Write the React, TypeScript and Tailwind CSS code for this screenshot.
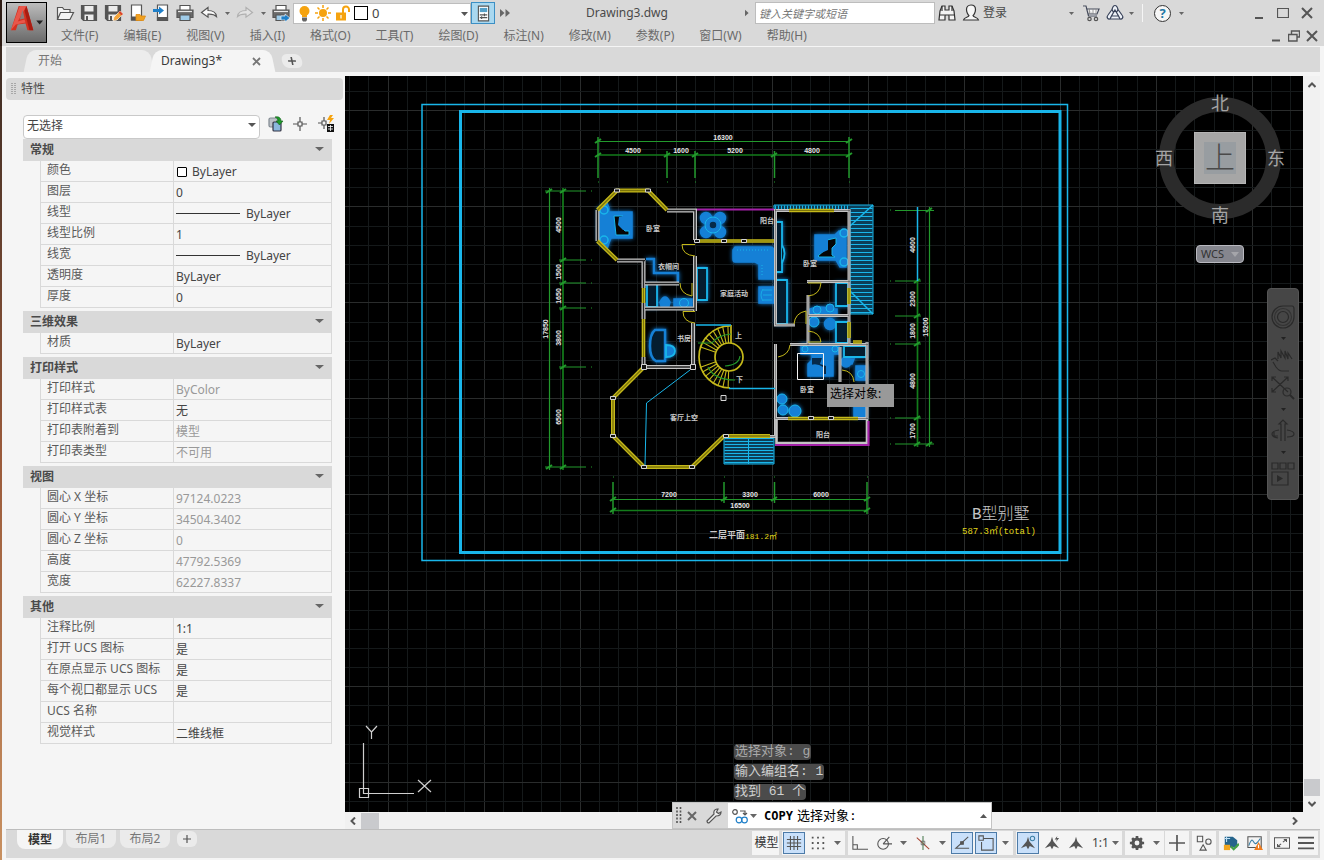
import React from 'react';
import clsx from 'clsx';

type Row = { label: string; value: string; muted?: boolean; swatch?: boolean; line?: boolean };

const SECTIONS: { title: string; rows: Row[] }[] = [
  {
    title: '常规',
    rows: [
      { label: '颜色', value: 'ByLayer', swatch: true },
      { label: '图层', value: '0' },
      { label: '线型', value: 'ByLayer', line: true },
      { label: '线型比例', value: '1' },
      { label: '线宽', value: 'ByLayer', line: true },
      { label: '透明度', value: 'ByLayer' },
      { label: '厚度', value: '0' },
    ],
  },
  { title: '三维效果', rows: [{ label: '材质', value: 'ByLayer' }] },
  {
    title: '打印样式',
    rows: [
      { label: '打印样式', value: 'ByColor', muted: true },
      { label: '打印样式表', value: '无' },
      { label: '打印表附着到', value: '模型', muted: true },
      { label: '打印表类型', value: '不可用', muted: true },
    ],
  },
  {
    title: '视图',
    rows: [
      { label: '圆心 X 坐标', value: '97124.0223', muted: true },
      { label: '圆心 Y 坐标', value: '34504.3402', muted: true },
      { label: '圆心 Z 坐标', value: '0', muted: true },
      { label: '高度', value: '47792.5369', muted: true },
      { label: '宽度', value: '62227.8337', muted: true },
    ],
  },
  {
    title: '其他',
    rows: [
      { label: '注释比例', value: '1:1' },
      { label: '打开 UCS 图标', value: '是' },
      { label: '在原点显示 UCS 图标', value: '是' },
      { label: '每个视口都显示 UCS', value: '是' },
      { label: 'UCS 名称', value: '' },
      { label: '视觉样式', value: '二维线框' },
    ],
  },
];

const MENUS = ['文件(F)', '编辑(E)', '视图(V)', '插入(I)', '格式(O)', '工具(T)', '绘图(D)', '标注(N)', '修改(M)', '参数(P)', '窗口(W)', '帮助(H)'];

/* ---------- small shared pieces ---------- */

function Ico({ children, className = 'w-5 h-5', box = '0 0 20 20' }: { children: React.ReactNode; className?: string; box?: string }) {
  return (
    <svg viewBox={box} className={clsx('shrink-0', className)} fill="none" stroke="#555" strokeWidth="1.2" aria-hidden="true">
      {children}
    </svg>
  );
}

function Caret({ className = 'w-[7px] h-1 text-[#666]' }: { className?: string }) {
  return (
    <svg viewBox="0 0 8 4" className={clsx('shrink-0', className)} preserveAspectRatio="none" aria-hidden="true">
      <path d="M0 0h8L4 4z" fill="currentColor" />
    </svg>
  );
}

function Tool({ label, children, className = 'w-6' }: { label: string; children: React.ReactNode; className?: string }) {
  return (
    <button type="button" aria-label={label} className={clsx('h-6 shrink-0 flex items-center justify-center', className)}>
      {children}
    </button>
  );
}

function Drop({ label, className = 'w-[15px]', small }: { label: string; className?: string; small?: boolean }) {
  return (
    <Tool label={label} className={className}>
      {small ? <Caret className="h-[3px] w-[5px] text-[#666]" /> : <Caret />}
    </Tool>
  );
}

const floppy = (
  <>
    <path d="M2.5 2.5h15v15h-13l-2-2z" fill="#555" />
    <path d="M5.5 3h9v5.500h-9z" fill="#ececec" stroke="none" />
    <path d="M5.5 11.500h9V17h-9z" fill="#ececec" stroke="none" />
    <path d="M7 13h2v4H7z" fill="#555" stroke="none" />
  </>
);

const printer = (
  <>
    <path d="M5 7V2.500h10V7" fill="#fff" />
    <path d="M2 7h16v7.500H2z" fill="#6a6a6a" />
    <path d="M3 8.500h14" stroke="#e8e8e8" />
    <path d="M5 12h10v5.500H5z" fill="#9fcbe8" />
  </>
);

/* ---------- title bar ---------- */

function TitleRow() {
  return (
    <div className="flex h-6 items-center">
      <div className="flex items-center pl-[6px]">
        <Tool label="打开"><Ico><path d="M2.500 16.500v-12h5l1.500 2h6v3M2.500 16.500l3-7h13l-3.500 7z" fill="#f4f4f4" /></Ico></Tool>
        <Tool label="保存"><Ico>{floppy}</Ico></Tool>
        <Tool label="另存为">
          <Ico>
            {floppy}
            <path d="M10 18l1-4 6-6 3 3-6 6z" fill="#f3a43c" stroke="#fff" strokeWidth=".6" />
            <path d="M15.500 9.500l3 3 1.500-1.500-3-3z" fill="#d8442f" stroke="none" />
          </Ico>
        </Tool>
        <Tool label="从移动设备打开">
          <Ico>
            <path d="M4.500 2h10v15h-10z" fill="#fff" /><path d="M4.500 14h6v3h-6z" fill="#555" />
            <path d="M9 17.500v-6h4l1 1.500h4.500l-2 4.500z" fill="#f0a020" stroke="#e08a10" strokeWidth=".8" />
          </Ico>
        </Tool>
        <Tool label="保存到移动设备">
          <Ico>
            <path d="M6.500 2h10v15.500h-10z" fill="#fff" /><path d="M6.500 14.500h10v3h-10z" fill="#555" />
            <path d="M2 6h6V3.500L13 7.500 8 11.500V9H2z" fill="#1f7fc8" stroke="none" />
          </Ico>
        </Tool>
        <Tool label="打印"><Ico>{printer}</Ico></Tool>
        <Tool label="放弃"><Ico><path d="M2.500 9.500l6.500-5v3c5 0 8 2 8.500 6-2-2-4.500-2.500-8.500-2.300v3z" fill="#fafafa" /></Ico></Tool>
        <Drop label="放弃列表" className="w-3" small />
        <Tool label="重做"><Ico><path d="M17.500 9.500l-6.500-5v3c-5 0-8 2-8.500 6 2-2 4.500-2.500 8.500-2.300v3z" fill="#e2e2e2" stroke="#b0b0b0" /></Ico></Tool>
        <Drop label="重做列表" className="w-3" small />
        <Tool label="发布">
          <Ico>{printer}<path d="M10 13h4v-2l5 4-5 4v-2h-4z" fill="#1f7fc8" stroke="#fff" strokeWidth=".6" /></Ico>
        </Tool>
      </div>

      <div className="relative flex h-[21px] w-[178px] shrink-0 items-center border border-[#bdbdbd] bg-white pl-1">
        <Ico className="w-[13px] h-[17px]" box="0 0 13 17">
          <circle cx="6.500" cy="6" r="5" fill="#f5a30f" stroke="none" /><path d="M4 10h5v2H4z" fill="#f5a30f" stroke="none" />
          <path d="M4 12.500h5V15l-1 1.500H5L4 15z" fill="#666" stroke="none" />
        </Ico>
        <Ico className="ml-1 w-4 h-4" box="0 0 16 16">
          <circle cx="8" cy="8" r="4" fill="#f5a30f" stroke="none" />
          <path d="M8 0v3M8 13v3M0 8h3M13 8h3M2.500 2.500l2 2M11.500 11.500l2 2M13.500 2.500l-2 2M4.500 11.500l-2 2" stroke="#f5a30f" strokeWidth="1.500" />
        </Ico>
        <Ico className="ml-1 w-[15px] h-4" box="0 0 15 16">
          <path d="M8 8V4.500a3 3 0 0 1 6 0V7" stroke="#f5a30f" strokeWidth="2" />
          <path d="M1 7.500h10v8H1z" fill="#f5a30f" stroke="none" /><path d="M6 10v3.500" stroke="#fff" />
        </Ico>
        <span className="ml-1 h-[14px] w-[14px] shrink-0 border border-black bg-white" />
        <select aria-label="图层" className="h-full flex-1 appearance-none bg-transparent pl-1 text-[13px] leading-4 text-[#444] outline-none">
          <option>0</option>
        </select>
        <Caret className="pointer-events-none absolute right-[2px] top-2 h-1 w-[7px] text-[#555]" />
      </div>
      <button type="button" aria-label="图层特性" className="flex h-[22px] w-6 shrink-0 items-center justify-center border border-[#3c8fc4] bg-[#a9d8f0]">
        <Ico className="w-[13px] h-[17px]" box="0 0 14 18">
          <path d="M1.500 1h11v16h-11z" fill="#fff" /><path d="M3 3h8v4.500H3z" fill="#55a0c8" stroke="none" />
          <path d="M3 10.500h8M3 13.500h8M8 9v3M5 12v3" />
        </Ico>
      </button>
      <Tool label="更多" className="w-5"><Ico className="w-[10px] h-2" box="0 0 10 8"><path d="M0 0l4.500 4L0 8zM5.500 0L10 4 5.500 8z" fill="#666" stroke="none" /></Ico></Tool>

      <h1 className="min-w-0 flex-1 truncate text-center text-[12px] leading-4 text-[#4a4a4a]">Drawing3.dwg</h1>

      <Tool label="展开搜索" className="w-4"><Ico className="w-1 h-2" box="0 0 5 8"><path d="M0 0l4.500 4L0 8z" fill="#666" stroke="none" /></Ico></Tool>
      <input
        type="text"
        aria-label="搜索"
        placeholder="键入关键字或短语"
        className="h-[22px] w-[180px] shrink-0 border border-[#bdbdbd] bg-white px-[3px] text-[11px] italic text-[#333] outline-none placeholder:text-[#777]"
      />
      <Tool label="查找">
        <Ico>
          <path d="M3 8l2-5h3v4h4V3h3l2 5 1 9h-6v-5H8v5H2z" fill="#f4f4f4" stroke="#333" /><path d="M2.500 12h5M12.500 12h5M5 3v5M15 3v5" stroke="#333" />
        </Ico>
      </Tool>
      <button type="button" className="flex h-6 shrink-0 items-center text-xs text-[#4a4a4a]">
        <Ico className="w-6 h-5" box="0 0 24 20">
          <path d="M12 2c3 0 4.500 2 4.500 4.500S15 12 14 12.500c0 2 5 1.500 5.500 4.500h-15c.5-3 5.500-2.500 5.500-4.500-1-.5-2.500-3.500-2.500-6S9 2 12 2z" fill="#f6f6f6" stroke="#333" />
        </Ico>
        登录
      </button>
      <Drop label="登录菜单" className="ml-[56px] w-4" small />
      <Tool label="购物车">
        <Ico><path d="M2 3h3l2.500 10H16M6 6h12l-2 5H7" fill="#f6f6f6" stroke="#444a5a" /><path d="M8.500 6v5M12 6v5M15 6v5" stroke="#888" strokeWidth=".8" /><circle cx="8.500" cy="16" r="1.700" /><circle cx="15" cy="16" r="1.700" /></Ico>
      </Tool>
      <Tool label="应用程序">
        <Ico>
          <path d="M10 2.500c2 0 2.500 2 3 4l4 5.500c2 2.500 0 4.500-2 4H5c-2 .5-4-1.500-2-4l4-5.500c.5-2 1-4 3-4z" fill="#eef2f8" stroke="#39435a" />
          <path d="M10 7l3.500 6h-7zM7 6.500l1.500 3M13 6.500l-1.500 3M6.500 13L5 16M13.500 13l1.500 3" stroke="#39435a" />
        </Ico>
      </Tool>
      <Drop label="应用程序菜单" className="w-2" small />
      <span className="mx-[7px] h-[18px] w-px shrink-0 bg-[#f5f5f5]" />
      <button type="button" aria-label="帮助" className="ml-1 flex h-[17px] w-[17px] shrink-0 items-center justify-center rounded-full border border-[#333] bg-[#f6f6f6] text-[13px] font-bold leading-none text-[#2377a5]">?</button>
      <Drop label="帮助菜单" className="w-5" small />
      <div className="ml-14 flex shrink-0 items-center pr-[5px]">
        <Tool label="最小化"><Ico className="w-3 h-3" box="0 0 12 12"><path d="M2 11h8" strokeWidth="2" /></Ico></Tool>
        <Tool label="最大化"><Ico className="w-3 h-3" box="0 0 12 12"><path d="M.500 1.500h11v9H.500z" /></Ico></Tool>
        <Tool label="关闭"><Ico className="w-3 h-3" box="0 0 12 12"><path d="M1 1l10 10M11 1L1 11" strokeWidth="2" /></Ico></Tool>
      </div>
    </div>
  );
}

function Header() {
  return (
    <header className="flex h-[46px] shrink-0 bg-[#d9d9d9]">
      <div className="w-[2px] shrink-0 bg-[#2e1c14]" />
      <button type="button" aria-label="应用程序菜单" className="relative ml-1 mt-[2px] h-[41px] w-[41px] shrink-0 border border-black bg-gradient-to-b from-[#bdbdbd] to-[#6a6a6a]">
        <svg viewBox="0 0 40 40" className="h-full w-full" aria-hidden="true">
          <path d="M4 28L12 3h8l7 25h-6l-2-7-8 1-2 6z" fill="#d5301f" />
          <path d="M13 3h7l-9 16 7-2 1 3-10 2-5 6z" fill="#e8574a" />
          <path d="M16 7l2 9-5 1z" fill="#8d7a78" />
          <path d="M20 3l7 25h-4l-5-20z" fill="#a81c12" />
          <path d="M30 18h7l-3.500 4z" fill="#222" />
        </svg>
      </button>
      <div className="flex min-w-0 flex-1 flex-col pt-px">
        <TitleRow />
        <div className="flex h-[21px] items-center">
          <nav className="flex gap-[25px] pl-[14px] pt-px text-xs text-[#6a6a6a]">
            {MENUS.map((m) => (
              <button type="button" key={m} className="whitespace-nowrap leading-4">{m}</button>
            ))}
          </nav>
          <div className="ml-auto flex pr-[3px]">
            <Tool label="最小化文档" className="w-[18px]"><Ico className="w-3 h-3" box="0 0 12 12"><path d="M2 10.500h8" strokeWidth="2" /></Ico></Tool>
            <Tool label="还原文档" className="w-[18px]"><Ico className="w-3 h-3" box="0 0 12 12"><path d="M3.500 4V1h8v6H9M.500 4.500H9V11H.500z" strokeWidth="1.400" /></Ico></Tool>
            <Tool label="关闭文档" className="w-[18px]"><Ico className="w-3 h-3" box="0 0 12 12"><path d="M1 1l10 10M11 1L1 11" strokeWidth="2" /></Ico></Tool>
          </div>
        </div>
      </div>
    </header>
  );
}

function FileTabs() {
  return (
    <div className="mr-1 flex h-[25px] shrink-0 items-end bg-[#d9d9d9] pl-5 text-[#777]">
      <button
        type="button"
        className="relative h-[22px] w-[126px] pl-3 text-left text-xs before:absolute before:inset-y-0 before:left-0 before:right-8 before:-skew-x-12 before:rounded-tl-lg before:bg-[#ececec] after:absolute after:inset-y-0 after:left-8 after:right-0 after:skew-x-12 after:rounded-tr-lg after:bg-[#ececec]"
      >
        <span className="relative z-10">开始</span>
      </button>
      <div className="relative flex h-[22px] w-[121px] items-center pl-[9px] before:absolute before:inset-y-0 before:left-0 before:right-8 before:-skew-x-12 before:rounded-tl-lg before:bg-[#f5f5f5] after:absolute after:inset-y-0 after:left-8 after:right-0 after:skew-x-12 after:rounded-tr-lg after:bg-[#f5f5f5]">
        <button type="button" className="relative z-10 text-[12px] text-[#3a3a3a]">Drawing3*</button>
        <button type="button" aria-label="关闭选项卡" className="relative z-10 ml-auto mr-3">
          <Ico className="w-[9px] h-[9px]" box="0 0 9 9"><path d="M1 1l7 7M8 1L1 8" stroke="#777" strokeWidth="1.800" /></Ico>
        </button>
      </div>
      <button type="button" aria-label="新图形" className="mb-1 ml-[9px] flex h-[14px] w-5 skew-x-12 items-center justify-center rounded-md bg-[#ebebeb]">
        <Ico className="w-2 h-2" box="0 0 8 8"><path d="M4 0v8M0 4h8" strokeWidth="1.600" /></Ico>
      </button>
    </div>
  );
}

/* ---------- properties palette ---------- */

function Palette() {
  return (
    <aside className="flex w-[339px] shrink-0 flex-col bg-[#f5f5f5] pt-[2px]">
      <div className="mr-[2px] flex h-[22px] shrink-0 items-center rounded-sm bg-[#d9d9d9] pl-[5px]">
        <Ico className="w-[5px] h-3" box="0 0 5 12"><path d="M1 0v12M4 0v12" stroke="#777" strokeDasharray="1 1" strokeWidth="1" /></Ico>
        <h2 className="ml-[5px] text-xs text-[#4a4a4a]">特性</h2>
      </div>
      <div className="mt-3 flex h-6 items-center pl-[17px]">
        <div className="relative h-6 w-[237px]">
          <select aria-label="选择" className="h-full w-full appearance-none rounded-sm border border-[#c9c9c9] bg-white pl-[3px] pb-[2px] text-xs text-[#444] outline-none">
            <option>无选择</option>
          </select>
          <Caret className="pointer-events-none absolute right-1 top-[11px] h-1 w-2 text-[#555]" />
        </div>
        <Tool label="PICKADD" className="ml-1 w-6">
          <Ico className="w-4 h-4" box="0 0 16 16">
            <rect x="1" y="2" width="9" height="9" rx="1.500" fill="#bcc2c8" stroke="#808890" /><rect x="5" y="6" width="8" height="9" rx="1" fill="#8bb8dd" stroke="#334" />
            <path d="M7 1c4-1 6 1 6 4h2l-3.500 4L8 5h2c0-2-1-3-3-4z" fill="#1f9a2a" stroke="#0d5c15" strokeWidth=".6" />
          </Ico>
        </Tool>
        <Tool label="选择对象" className="w-6">
          <Ico className="w-[14px] h-[14px]" box="0 0 14 14"><path d="M7 0v5M7 9v5M0 7h5M9 7h5M5 5h4v4H5z" /></Ico>
        </Tool>
        <Tool label="快速选择" className="w-7">
          <Ico className="w-[18px] h-[18px]" box="0 0 18 18">
            <path d="M7 2v4M7 10v4M1 8h4M5 6h4v4H5z" /><path d="M13 0l-3 5h3l-1 4 5-6h-3l2-3z" fill="#f5a30f" stroke="none" />
            <path d="M10 9h7v8h-7z" fill="#111" stroke="none" /><path d="M11 11.500h5M11 14h5M13.500 10v6" stroke="#fff" strokeWidth=".8" />
          </Ico>
        </Tool>
      </div>
      <div className="ml-[17px] mr-[13px] mt-[3px] flex flex-col gap-[3px]">
        {SECTIONS.map((s) => (
          <section key={s.title}>
            <button type="button" className="flex h-[22px] w-full items-center bg-[#d9d9d9] pl-[7px] pr-2 text-xs font-bold text-[#4a4a4a]">
              {s.title}
              <Caret className="mb-[2px] ml-auto h-1 w-[9px] text-[#666]" />
            </button>
            <div className="pl-[17px]">
              <table className="w-full table-fixed border-separate border-spacing-0 border-l border-[#d9d9d9]">
                <tbody>
                  {s.rows.map((r) => (
                    <tr key={r.label} className="h-[21px]">
                      <th scope="row" className="w-[133px] whitespace-nowrap border-b border-r border-[#d9d9d9] p-0 pb-[3px] pl-[6px] text-left text-xs font-normal leading-[17px] text-[#5a5a5a]">
                        {r.label}
                      </th>
                      <td className={clsx('border-b border-r border-[#d9d9d9] p-0 pl-[2px] pt-px text-[12px] leading-[17px]', r.muted ? 'text-[#999]' : 'text-[#444]')}>
                        <div className="flex h-[17px] items-center">
                          {r.swatch && <span className="ml-px mr-[5px] h-[10px] w-[10px] rounded-[1px] border border-black bg-white" />}
                          {r.line && <span className="mr-[6px] h-px w-16 bg-[#333]" />}
                          {r.value}
                        </div>
                      </td>
                    </tr>
                  ))}
                </tbody>
              </table>
            </div>
          </section>
        ))}
      </div>
    </aside>
  );
}

/* ---------- drawing ---------- */

const G = '#22992c';
const W = '#c4c4c4';
const Y = '#c4b81a';
const B = '#1580d6';
const C = '#19b6ea';

// grid origin and step, every fifth line is a major one
const GRID_X = Array.from({ length: 80 }, (_, i) => ({ at: Math.round(387.500 + (i - 5) * 19.21), major: i % 5 === 0 }));
const GRID_Y = Array.from({ length: 60 }, (_, i) => ({ at: Math.round(110.300 + (i - 5) * 19.2), major: i % 5 === 0 }));

function Wall({ d, color = W, core = '#202020', w = 4 }: { d: string; color?: string; core?: string; w?: number }) {
  return (
    <>
      <path d={d} stroke={color} strokeWidth={w} />
      <path d={d} stroke={core} strokeWidth={w - 2.6} />
    </>
  );
}

function Num({ x, y, children, up }: { x: number; y: number; children: string; up?: boolean }) {
  return (
    <text x={x} y={y} textAnchor="middle" transform={up ? `rotate(-90 ${x} ${y})` : undefined} fill="#e6e6e6" className="font-[Liberation_Sans,sans-serif] text-[7px] font-bold">
      {children}
    </text>
  );
}

function Room({ x, y, children }: { x: number; y: number; children: string }) {
  return <text x={x} y={y} fill="#cacaca" className="text-[7px] font-bold">{children}</text>;
}

function FloorPlan() {
  const spokes = Array.from({ length: 19 }, (_, i) => {
    const a = ((92 + i * 9.8) * Math.PI) / 180;
    return `M${729 + 14 * Math.cos(a)} ${357 - 14 * Math.sin(a)}L${729 + 31 * Math.cos(a)} ${357 - 31 * Math.sin(a)}`;
  }).filter((_, i) => i < 8 || i > 10).join('');
  const ticks = [
    [598, 141], [849, 141], [598, 155], [667, 155], [695, 155], [774, 155], [849, 155],
    [549, 191], [549, 467], [563, 191], [563, 260], [563, 283], [563, 308], [563, 367], [563, 467],
    [917, 281], [917, 316], [917, 344], [917, 418], [917, 444], [929, 210], [929, 444],
    [613, 499], [724, 499], [774, 499], [867, 499], [613, 510], [867, 510],
  ];
  return (
    <svg viewBox="345 76 958 736" preserveAspectRatio="xMinYMin slice" className="absolute inset-0 h-full w-full" fill="none" role="img" aria-label="二层平面图">
      <g shapeRendering="crispEdges">
        {GRID_X.map((g) => <path key={g.at} d={`M${g.at + 0.5} 0V1200`} stroke={g.major ? '#2a2c2c' : '#15191a'} />)}
        {GRID_Y.map((g) => <path key={g.at} d={`M0 ${g.at + 0.5}H1800`} stroke={g.major ? '#2a2c2c' : '#15191a'} />)}
      </g>

      {/* sheet frame */}
      <path d="M422 104.500H1067.500V560.500H422z" stroke={C} strokeWidth="1.500" />
      <path d="M460.500 111.500H1060V552.500H460.500z" stroke={C} strokeWidth="3" />

      {/* dimension lines */}
      <g stroke={G} strokeWidth="1.200">
        <path d="M598 141.500H849M549.500 188V470M929.500 207V447M613 499.500H867" />
        <path d="M598 155H849M563 188V470M917.500 281V447M613 510.500H867" strokeWidth="1.700" stroke="#137c1b" />
        <path d="M598 137V178M667 151V178M695 151V178M774.500 151V178M849 137V178" strokeWidth="1.500" />
        <path d="M545 191H586M559 260H586M559 283H586M559 308H586M559 367H586M545 467H586" />
        <path d="M895 210.500H934M895 281H921M895 316H921M895 344H921M895 418H921M895 444H934" />
        <path d="M613 482V514M724 482V503M774.500 482V503M867 482V514" strokeWidth="1.500" />
        {ticks.map(([x, y]) => <path key={`${x}-${y}`} d={`M${x - 3} ${y + 2}L${x + 3} ${y - 2}`} strokeWidth="2" />)}
        <path d="M591 191h1M591 260h1M591 283h1M591 308h1M591 367h1M591 467h1M890 210h1M890 281h1M890 344h1M890 418h1M890 444h1M598 182h1M667 182h1M695 182h1M774 182h1M849 182h1M613 477h1M724 477h1M774 477h1M867 477h1" />
      </g>
      <path d="M917.500 207V281" stroke={C} strokeWidth="1.500" />

      <Num x={723} y={140}>16300</Num>
      <Num x={633} y={153}>4500</Num>
      <Num x={681} y={153}>1600</Num>
      <Num x={735} y={153}>5200</Num>
      <Num x={812} y={153}>4800</Num>
      <Num x={561} y={225} up>4500</Num>
      <Num x={561} y={272} up>1500</Num>
      <Num x={561} y={296} up>1650</Num>
      <Num x={561} y={338} up>3800</Num>
      <Num x={561} y={417} up>6500</Num>
      <Num x={548} y={329} up>17850</Num>
      <Num x={915} y={245} up>4600</Num>
      <Num x={915} y={299} up>2300</Num>
      <Num x={915} y={331} up>1800</Num>
      <Num x={915} y={381} up>4800</Num>
      <Num x={915} y={431} up>1700</Num>
      <Num x={928} y={327} up>15200</Num>
      <Num x={669} y={497}>7200</Num>
      <Num x={750} y={497}>3300</Num>
      <Num x={821} y={497}>6000</Num>
      <Num x={740} y={508}>16500</Num>

      {/* roof and porch hatching */}
      <path d="M774 205H873V314H850V210H774z" fill="#0c3f58" stroke={C} />
      <path d="M775 207.500H850" stroke={C} strokeWidth="4" strokeDasharray="1 2" />
      <path d="M861.500 208V314" stroke={C} strokeWidth="22" strokeDasharray="1 3" />
      <path d="M850 226L873 205M850 291L873 314" stroke={C} strokeWidth="1.500" />
      <path d="M724 437H774V464H724z" fill="#0c3f58" stroke={C} />
      <path d="M749 438V464" stroke={C} strokeWidth="49" strokeDasharray="1 2" />
      <path d="M748.500 437V464" stroke={C} />

      {/* furniture, highlighted */}
      <g fill={B} stroke={B} strokeWidth="1.500" className="[filter:drop-shadow(0_0_2px_#1580d6)]">
        <path d="M598 209l9-6 2 5v4h23v26h-21l-2 5-2 6-9-9z" />
        <path d="M614 216h9l-4 8 6 7h4v4H616z" fill="#050505" stroke={C} strokeWidth="1" />
        <path d="M619 217l12-3v14l-8 2-5-5z" stroke="none" />
        <circle cx="604" cy="210" r="4" stroke={C} /><circle cx="604" cy="240" r="4" stroke={C} />
        <circle cx="706" cy="218" r="5.500" /><circle cx="720" cy="218" r="5.500" /><circle cx="706" cy="232" r="5.500" /><circle cx="720" cy="232" r="5.500" />
        <circle cx="713" cy="225" r="8" stroke={C} strokeWidth="1" /><circle cx="713" cy="225" r="4" fill="#062a4a" />
        <path d="M735 247H771q3 1 3 4V279H759V264l-4-2H735q-2 0-2-3V250z" />
        <path d="M737 250H768M762 265V277" stroke={C} strokeWidth="1" strokeDasharray="1 2" />
        <path d="M759 287h15v16h-15z" /><path d="M763 289q-4 6 0 12M763 290h9M763 295h9M763 300h9" fill="none" stroke={C} strokeWidth=".8" />
        <path d="M815 235H835l4-4h7v36h-6l-4-7H815z" />
        <path d="M818 256l9-8v-8l9-2v6l-4 4v7l3 2h-16z" fill="#050505" stroke={C} strokeWidth="1" />
        <path d="M815 236h13v14l-11 5z" stroke="none" />
        <circle cx="844" cy="233" r="4" stroke={C} /><circle cx="844" cy="262" r="4" stroke={C} />
        <path d="M810 309q10-4 22 0h5v7h-28v-5z" /><circle cx="817" cy="310" r="4" stroke={C} strokeWidth="1" /><circle cx="830" cy="308" r="4" stroke={C} strokeWidth="1" />
        <circle cx="814" cy="322" r="5" stroke={C} strokeWidth="1" /><circle cx="830" cy="324" r="5.500" />
        <path d="M801 344H839V354H833V376H808V364l4-4V354H801z" />
        <path d="M812 358h10l-2 6 6 2v8h-9l-5-3z" fill="#062a4a" stroke="none" /><path d="M808 366q8-4 15 1v9h-15z" stroke="none" />
        <circle cx="805" cy="349" r="3" stroke={C} strokeWidth="1" /><circle cx="835" cy="349" r="3" stroke={C} strokeWidth="1" />
        <circle cx="782" cy="399" r="5" stroke={C} strokeWidth="1" /><circle cx="783" cy="410" r="5" stroke={C} strokeWidth="1" /><circle cx="795" cy="411" r="6" stroke={C} strokeWidth="1" />
        <circle cx="846" cy="362" r="5" /><path d="M848 359h6l-2 5h-4zM856 366h11v14h-11zM854 400h12v17h-12z" /><circle cx="861" cy="374" r="3.500" stroke={C} strokeWidth="1" />
        <path d="M661 306l-1-4q5-10 10 0l-1 4zM648 306q4-6 9 0zM674 299h18v7h-18z" /><circle cx="684" cy="303" r="4.500" stroke={C} strokeWidth="1" />
      </g>
      <g stroke={C} strokeWidth="1.800" fill="#041d30" className="[filter:drop-shadow(0_0_2px_#1580d6)]">
        <path d="M697 268h10v32H697zM776 222h6v50h-6zM776 280h11v44H776zM836 283h12v23h-12zM836 322h12v21h-12zM844 346h22v11h-22zM647 284h10v23h-10z" />
        <path d="M782 245q5 8 0 18" />
        <path d="M646 259h8v14h24v10" fill="none" stroke={B} strokeWidth="2.500" />
        <path d="M655 330h10v31H656q-6-3-6-15t5-16z" stroke={B} strokeWidth="2.500" /><path d="M666 345q9 0 9 6t-9 6z" fill={B} />
      </g>

      {/* outer and inner walls */}
      <Wall d="M597.500 210V241M617 260.500H645M643.500 260V288M643.500 303V319M643.500 357V367H693V323M695 311V256M695 240V210.500H667M645 283.500H679M645 308.500H695" />
      <Wall d="M775.500 209V325H795M775 210.500H850M849 209V283M807 281.500H850M808 295V345M808 315.500H849M849 283V344M775.500 344V437M790 344.500H868M867 342V419M840 347V382M770 436.500H776M776 418.500H868" w={3} />
      <Wall d="M776.500 419V443H867V419" w={2.600} />
      <Wall d="M597.500 210L617 190.500H648L667 210M597.500 241L617 260M644 367L613 398V436L644 467H692L724 436H770" color={Y} core="#7c7409" />
      <Wall d="M643.500 288V303M643.500 319V357M697 241H774M789 210.500H834M788 418.500H858M849 288V304M849 322V338M853 342H862" color={Y} core="#7c7409" w={3.600} />
      <g fill="#111" stroke="#d4d4d4" strokeWidth="1">
        {[[617, 190.500], [648, 190.500], [613, 398], [613, 436], [644, 467], [692, 467], [726, 436], [724, 241], [744, 241], [697, 241], [811, 418], [831, 418]].map(([x, y]) => (
          <path key={`${x}-${y}`} d={`M${x - 2.500} ${y - 1.500}h5v3h-5z`} />
        ))}
        <path d="M641.500 364.500h5v5h-5zM690.500 364.500h5v5h-5zM721 395.500h5v5h-5z" />
      </g>
      <path d="M697 209.500H774M775 445H868.500V421" stroke="#a321a8" strokeWidth="2.200" />

      {/* doors */}
      <path
        d="M695 244.500H682Q682 255 695 256M680 283Q680 294 692 296V283M695 311.500H683Q683 322 695 323M808 283H821Q820 295 808 296M794 324Q795 313 806 311V324M808 331Q820 332 821 342H808M778 357Q789 355 790 345M842 370Q853 371 854 382"
        stroke={Y}
      />

      {/* staircase */}
      <g stroke={Y} strokeWidth="1.700">
        <circle cx="729" cy="357" r="14" />
        <path d="M730 326A31 31 0 1 0 730 388M731 325V343" />
        <path d={spokes} strokeWidth="1.100" />
      </g>
      <path d="M698 343H712Q718 335 731 334M708 367Q714 380 735 380M740 356Q739 365 725 366" stroke={G} strokeWidth="1.200" />
      <path d="M696 325H731M729 388.500H775" stroke={C} strokeWidth="1.500" />
      <path d="M690 370L646.500 403L645 465" stroke={C} />

      <Room x={646} y={231}>卧室</Room>
      <Room x={658} y={269}>衣帽间</Room>
      <Room x={760} y={223}>阳台</Room>
      <Room x={720} y={296}>家庭活动</Room>
      <Room x={803} y={266}>卧室</Room>
      <Room x={677} y={341}>书房</Room>
      <Room x={735} y={338}>上</Room>
      <Room x={736} y={382}>下</Room>
      <Room x={670} y={420}>客厅上空</Room>
      <Room x={800} y={392}>卧室</Room>
      <Room x={816} y={437}>阳台</Room>
      <text x="709" y="538" fill="#cacaca" className="text-[9px] font-bold">二层平面</text>
      <text x="745" y="539" fill="#e0d81c" className="font-[Liberation_Mono,Noto_Sans_CJK_SC,monospace] text-[8px]">181.2㎡</text>
      <text x="972" y="519" fill="#c4c4c4" className="font-[Liberation_Mono,Noto_Sans_CJK_SC,monospace] text-[16px] font-light">B型别墅</text>
      <text x="962" y="534" fill="#e0d81c" className="font-[Liberation_Mono,Noto_Sans_CJK_SC,monospace] text-[9px]">587.3㎡(total)</text>

      {/* pick box */}
      <path d="M797.500 353.500H823.500V379.500H797.500z" stroke="#f4f4f4" />

      {/* UCS icon */}
      <path d="M363.500 743V793.500H414M359.500 788.500h9v9h-9zM366 726l5.500 6V739M377 726l-5.500 6M418 780l13 12M431 780l-13 12" stroke="#cfcfcf" strokeWidth="1.200" />
    </svg>
  );
}

function ViewCube() {
  return (
    <div className="absolute right-[18px] top-[17px] flex flex-col items-center text-[18px] leading-6 text-[#a5a5a5]">
      <div className="relative h-[130px] w-[130px]">
        <div className="absolute inset-1 rounded-full border-[15px] border-[#2b2b2b]" />
        <button type="button" className="absolute -top-[2px] left-1/2 -translate-x-1/2">北</button>
        <button type="button" className="absolute left-0 top-1/2 -translate-y-1/2">西</button>
        <button type="button" className="absolute right-0 top-1/2 -translate-y-1/2">东</button>
        <button type="button" className="absolute -bottom-1 left-1/2 -translate-x-1/2">南</button>
        <button type="button" aria-label="上" className="absolute inset-[39px] flex items-center justify-center border border-[#b5b5b5] bg-[#a6a6a6]">
          <span className="flex h-8 w-8 items-center justify-center bg-[#989da1] font-[Liberation_Serif,Noto_Sans_CJK_SC,serif] text-[30px] font-light leading-8 text-[#4a4a4a]">上</span>
        </button>
      </div>
      <button type="button" className="mt-[22px] flex h-[18px] w-12 items-center justify-between rounded border border-[#b9b9c0] bg-[#85868e] px-1 text-[11px] leading-4 text-[#333]">
        WCS <Caret className="h-[5px] w-2 text-[#a5a5aa]" />
      </button>
    </div>
  );
}

function NavBar() {
  return (
    <div className="absolute right-1 top-[212px] flex h-[212px] w-8 flex-col items-center rounded-sm border border-[#555] bg-[#464646] pt-4">
      <Tool label="全导航控制盘" className="w-7"><Ico className="w-6 h-6" box="0 0 24 24"><path d="M12 1h9q2 0 2 3v8a11 11 0 1 1-11-11z" stroke="#2a2a2a" /><circle cx="12" cy="12" r="5.500" stroke="#2a2a2a" /><circle cx="12" cy="12" r="8.500" stroke="#333" /></Ico></Tool>
      <Caret className="my-2 h-[3px] w-[5px] text-[#222]" />
      <Tool label="平移" className="w-7"><Ico className="w-6 h-6" box="0 0 24 24"><path d="M7 11V4l3 6V3l4 7V3l3 8V5l4 6M0 12l4-2 3 3M2 14l3 5q3 4 6 4h7" stroke="#2a2a2a" /></Ico></Tool>
      <Tool label="缩放" className="mt-1 w-7"><Ico className="w-6 h-6" box="0 0 24 24"><path d="M1 1l16 15M17 1L1 16M1 5V1h4M13 1h4v4M1 12v4h4" stroke="#2a2a2a" /><circle cx="16" cy="16" r="4" stroke="#2a2a2a" /><path d="M19 19l4 4" stroke="#2a2a2a" strokeWidth="2" /></Ico></Tool>
      <Caret className="my-2 h-[3px] w-[5px] text-[#222]" />
      <Tool label="动态观察" className="w-7"><Ico className="w-6 h-6" box="0 0 24 24"><path d="M10 22V5H8l4-4 4 4h-2v17M8 11q-7 1-7 4t6 4M16 11q7 1 7 4t-7 3M2 17h5M3 13v5" stroke="#2a2a2a" /></Ico></Tool>
      <Caret className="my-2 h-[3px] w-[5px] text-[#222]" />
      <Tool label="ShowMotion" className="w-7"><Ico className="w-6 h-6" box="0 0 24 24"><path d="M1 1h6v6H1zM9 1h6v6H9zM17 1h6v6h-6zM1 10h16v13H1z" stroke="#2a2a2a" /><path d="M6 13l6 3.500L6 20z" fill="#2a2a2a" stroke="none" /></Ico></Tool>
    </div>
  );
}

function CommandLine() {
  const history = ['选择对象: g', '输入编组名: 1', '找到 61 个'];
  return (
    <div className="absolute -bottom-[17px] left-[327px] w-[320px] font-[DejaVu_Sans_Mono,Noto_Sans_CJK_SC,monospace]">
      <div className="flex flex-col items-start gap-1 pb-[2px] pl-[62px] font-[Liberation_Mono,Noto_Sans_CJK_SC,monospace] text-[13px] leading-4 text-[#cfcfcf]">
        {history.map((h) => (
          <p key={h} className="rounded-sm bg-[#4b4b4b] px-px first:text-[#a8a8a8]">{h}</p>
        ))}
      </div>
      <div className="flex h-[27px] items-stretch border border-[#c4c4c4] bg-white">
        <div className="flex w-[55px] shrink-0 items-center bg-[#d9d9d9]">
          <Ico className="ml-[3px] w-[6px] h-[17px]" box="0 0 6 17"><path d="M1 0v17M4.500 0v17" stroke="#555" strokeDasharray="2 1.500" strokeWidth="1.600" /></Ico>
          <Tool label="关闭命令行" className="w-5"><Ico className="w-[10px] h-[10px]" box="0 0 10 10"><path d="M1 1l8 8M9 1L1 9" stroke="#666" strokeWidth="2" /></Ico></Tool>
          <Tool label="自定义"><Ico className="w-4 h-4" box="0 0 16 16"><path d="M1 13l7-7q-1-4 3-5l1 0-1.500 3 2 1.500L15 4q0 4-5 4l-7 7q-2 0-2-2z" fill="#eee" /></Ico></Tool>
        </div>
        <button type="button" aria-label="近期命令" className="flex w-9 shrink-0 items-center gap-[2px] pl-1">
          <Ico className="w-4 h-4" box="0 0 16 16"><circle cx="3" cy="4" r="2.300" /><path d="M8 3h5v4M11 5l2 2 2-2" /><circle cx="7" cy="12" r="2.800" stroke="#1f7fc8" /><circle cx="12.500" cy="12" r="2.800" stroke="#1f7fc8" /></Ico>
          <Caret />
        </button>
        <label className="flex min-w-0 flex-1 items-center whitespace-nowrap text-xs text-black">
          <b className="font-bold">COPY</b>
          <span className="ml-1 text-[13px]">选择对象:</span>
          <input type="text" aria-label="命令" className="min-w-0 flex-1 outline-none" />
        </label>
        <button type="button" aria-label="命令历史" className="flex w-4 shrink-0 items-center justify-center"><Caret className="h-1 w-[7px] rotate-180 text-[#555]" /></button>
      </div>
    </div>
  );
}

function Canvas() {
  return (
    <main className="flex min-w-0 flex-1 flex-col">
      <div className="flex min-h-0 flex-1">
        <div className="relative min-w-0 flex-1 bg-black">
          <div className="absolute inset-0 overflow-hidden">
            <FloorPlan />
            <div className="absolute left-[482px] top-[308px] h-[23px] w-[67px] bg-[#999] pl-[3px] text-[12px] leading-5 text-black">选择对象:</div>
            <ViewCube />
            <NavBar />
          </div>
          <CommandLine />
        </div>
        <div className="flex w-[17px] shrink-0 flex-col items-center bg-[#f1f1f1]">
          <Tool label="向上滚动" className="w-4"><Ico className="mb-[6px] w-2 h-2" box="0 0 8 8"><path d="M.500 6L4 2.500 7.500 6" strokeWidth="2" /></Ico></Tool>
          <div className="mt-auto h-[17px] w-4 bg-[#c9cacd]" />
          <Tool label="向下滚动" className="w-4 mb-[-8px]"><Ico className="mb-2 w-2 h-2" box="0 0 8 8"><path d="M.500 2L4 5.500 7.500 2" strokeWidth="2" /></Ico></Tool>
        </div>
      </div>
      <div className="flex h-[17px] shrink-0 items-center bg-[#f1f1f1] pr-[17px]">
        <button type="button" aria-label="向左滚动" className="flex h-4 w-4 items-center justify-center"><Ico className="w-2 h-2" box="0 0 8 8"><path d="M6 .500L2.500 4 6 7.500" strokeWidth="2" /></Ico></button>
        <div className="h-4 w-[18px] bg-[#c9cacd]" />
        <button type="button" aria-label="向右滚动" className="ml-auto flex h-4 w-4 items-center justify-center"><Ico className="w-2 h-2" box="0 0 8 8"><path d="M2 .500L5.500 4 2 7.500" strokeWidth="2" /></Ico></button>
      </div>
    </main>
  );
}

/* ---------- status bar ---------- */

function Group({ children }: { children: React.ReactNode }) {
  return <div className="flex h-6 shrink-0 items-center bg-[#f4f4f4]">{children}</div>;
}

function Toggle({ label, on, children }: { label: string; on?: boolean; children: React.ReactNode }) {
  return (
    <button
      type="button"
      aria-label={label}
      aria-pressed={!!on}
      className={clsx('mx-px flex h-[22px] w-[22px] shrink-0 items-center justify-center', on && 'border border-[#4d7ba8] bg-[#c9e0fa]')}
    >
      <Ico className="w-4 h-4" box="0 0 18 18">{children}</Ico>
    </button>
  );
}

const scaleMan = <path d="M9 2l1.500 5 6.500 8-6-2.500L9 16l-2-3.500L1 15l6.500-8z" fill="#555" stroke="none" />;

function StatusBar() {
  return (
    <footer className="mb-[2px] mr-1 flex h-[29px] shrink-0 items-start border-t border-[#bdbdbd] bg-[#d9d9d9]">
      <div className="flex items-start pl-[11px] text-xs text-[#777]">
        <button type="button" className="h-[19px] w-[46px] rounded-b-lg bg-[#f5f5f5] font-bold text-[#333]">模型</button>
        <button type="button" className="ml-[3px] h-[18px] w-[50px] rounded-b-lg bg-[#ebebeb]">布局1</button>
        <button type="button" className="ml-1 h-[18px] w-[50px] rounded-b-lg bg-[#ebebeb]">布局2</button>
        <button type="button" aria-label="新建布局" className="ml-[7px] mt-px flex h-4 w-5 items-center justify-center rounded-md bg-[#ebebeb]">
          <Ico className="w-2 h-2" box="0 0 8 8"><path d="M4 0v8M0 4h8" /></Ico>
        </button>
      </div>
      <div className="ml-auto mt-px flex gap-[3px] pr-[2px]">
        <Group><button type="button" className="w-[27px] whitespace-nowrap pl-[2px] text-xs text-[#333]">模型</button></Group>
        <Group>
          <Toggle label="栅格" on><path d="M5 1v16M9 1v16M13 1v16M1 5h16M1 9h16M1 13h16" /></Toggle>
          <Toggle label="捕捉"><path d="M2 3h14M2 9h14M2 15h14" strokeDasharray="2 4" strokeWidth="2" /></Toggle>
          <Drop label="捕捉设置" />
        </Group>
        <Group>
          <Toggle label="正交"><path d="M1 1v15h17M1 11h5v5" /></Toggle>
          <Toggle label="极轴"><circle cx="8" cy="10" r="6" /><path d="M8 10h10M8 10l7-8" /></Toggle>
          <Drop label="极轴设置" />
          <Toggle label="等轴测"><path d="M2 3l14 13" stroke="#a84432" /><path d="M9 1v16" stroke="#4c7b52" /><path d="M7 7h4v4H7z" strokeWidth=".8" /></Toggle>
          <Drop label="等轴测设置" />
          <Toggle label="对象捕捉追踪" on><path d="M16 2L2 15h15" /><path d="M7.500 7.500h3v3h-3z" fill="#555" /></Toggle>
          <Toggle label="对象捕捉" on><path d="M6 4h11v13H4V8" /><path d="M1 1h5v5H1z" /></Toggle>
          <Drop label="捕捉模式" />
        </Group>
        <Group>
          <Toggle label="注释可见性" on>{scaleMan}<circle cx="14" cy="4" r="2.500" stroke="#3c7fa5" /></Toggle>
          <Toggle label="自动缩放">{scaleMan}<path d="M15 1l-3 4h2.500l-1 3 3.500-4.500h-2.500z" fill="#555" stroke="none" /></Toggle>
          <Toggle label="注释">{scaleMan}</Toggle>
          <button type="button" className="flex w-[34px] items-center gap-[3px] pl-1 text-xs text-[#444]">1:1 <Caret /></button>
        </Group>
        <Group>
          <Toggle label="工作空间">
            <circle cx="9" cy="9" r="4.500" strokeWidth="3.500" /><path d="M9 1v3M9 14v3M1 9h3M14 9h3M3.500 3.500l2 2M12.500 12.500l2 2M14.500 3.500l-2 2M5.500 12.500l-2 2" strokeWidth="3" />
          </Toggle>
          <Drop label="工作空间设置" />
          <span className="h-6 w-px bg-[#d9d9d9]" />
          <Toggle label="注释监视器"><path d="M9 0v18M0 9h18" strokeWidth="1.900" /></Toggle>
        </Group>
        <Group><Toggle label="隔离对象"><path d="M1.500 1.500h6v6h-6zM8 11l3.500 6h-7z" /><circle cx="14" cy="7.500" r="3" /></Toggle></Group>
        <Group>
          <Toggle label="硬件加速">
            <path d="M2 2h9l5 4v8H2z" fill="#25648c" stroke="none" /><path d="M2 4h6M4 2v6" stroke="#bfe0f5" />
            <path d="M1 11h7v6H1z" fill="#f0a51e" stroke="none" /><path d="M9 13l3 3 6-6" stroke="#43a047" strokeWidth="2.500" />
          </Toggle>
          <Toggle label="图形性能"><path d="M1 2h15v12H1z" /><path d="M2 12q3-9 5-5t4 2 4-5" stroke="#3c7fa5" /><path d="M13 8l5 9H8z" fill="#f07d1e" stroke="none" /><path d="M13 11v4" stroke="#fff" /></Toggle>
        </Group>
        <Group>
          <Toggle label="全屏显示"><path d="M.500 3h17v12H.500zM10 8l4-3M11 5h3v3M8 10l-4 3M4 10v3h3" /></Toggle>
          <Toggle label="自定义"><path d="M0 3h18M0 9h18M0 15h18" strokeWidth="2" /></Toggle>
        </Group>
      </div>
    </footer>
  );
}

export default function App() {
  return (
    <div className="flex h-screen min-h-[820px] flex-col overflow-hidden bg-[#f5f5f5] font-[Noto_Sans,Noto_Sans_CJK_SC,sans-serif]">
      <Header />
      <div className="flex min-h-0 flex-1">
        <div className="w-[2px] shrink-0 bg-gradient-to-b from-[#3a2a22] via-[#9a5a3a] to-[#c89060]" />
        <div className="flex min-w-0 flex-1 flex-col pl-1 pt-px">
          <FileTabs />
          <div className="flex min-h-0 flex-1 pr-1 pt-1">
            <Palette />
            <Canvas />
          </div>
          <StatusBar />
        </div>
      </div>
    </div>
  );
}
